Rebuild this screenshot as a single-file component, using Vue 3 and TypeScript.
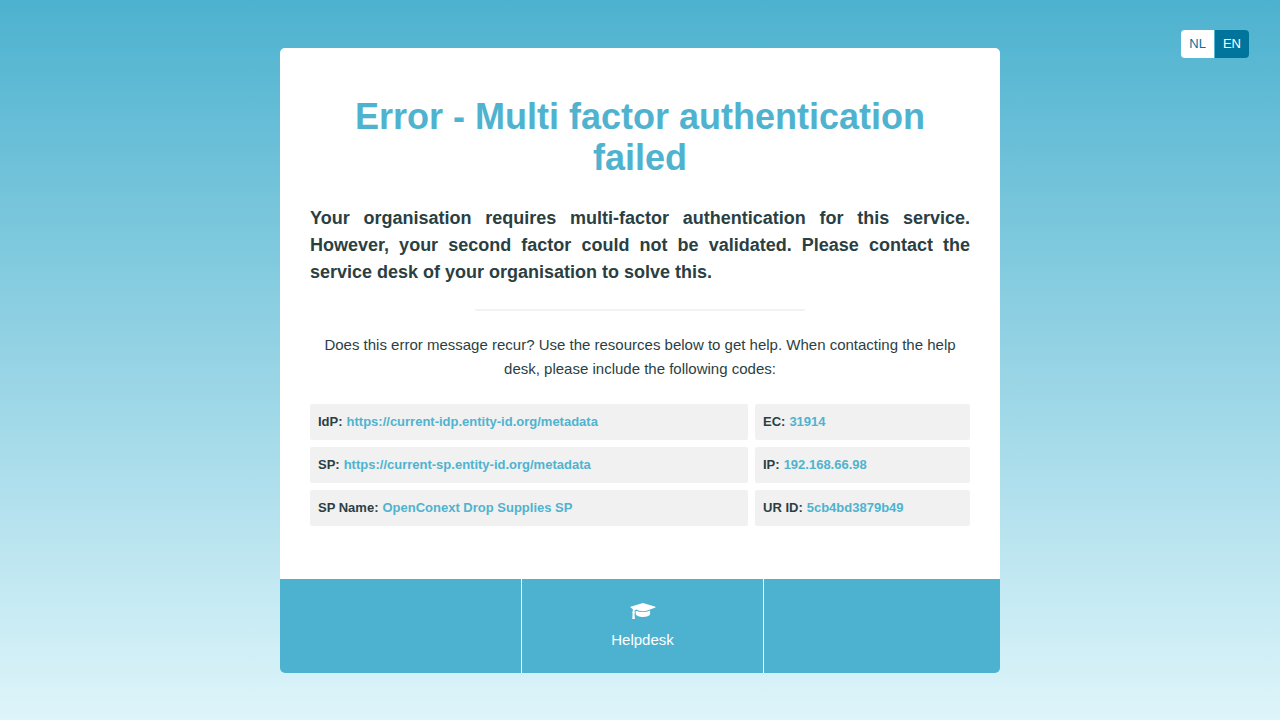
<script setup lang="ts">
import { ref } from 'vue'

interface Detail {
  label: string
  value: string
}

const languages: string[] = ['NL', 'EN']
const active = ref<string>('EN')

const details: Detail[] = [
  { label: 'IdP:', value: 'https://current-idp.entity-id.org/metadata' },
  { label: 'EC:', value: '31914' },
  { label: 'SP:', value: 'https://current-sp.entity-id.org/metadata' },
  { label: 'IP:', value: '192.168.66.98' },
  { label: 'SP Name:', value: 'OpenConext Drop Supplies SP' },
  { label: 'UR ID:', value: '5cb4bd3879b49' },
]
</script>

<template>
  <div class="page">
    <nav class="languages" aria-label="Language">
      <button
        v-for="language in languages"
        :key="language"
        type="button"
        class="language"
        :class="{ selected: language === active }"
        :aria-pressed="language === active"
        @click="active = language"
      >{{ language }}</button>
    </nav>

    <main class="card">
      <div class="body">
        <h1 class="title">Error - Multi factor authentication failed</h1>
        <p class="lead">
          Your organisation requires multi-factor authentication for this service. However, your second
          factor could not be validated. Please contact the service desk of your organisation to solve this.
        </p>
        <hr class="divider" />
        <p class="hint">
          Does this error message recur? Use the resources below to get help. When contacting the help
          desk, please include the following codes:
        </p>
        <dl class="details">
          <div v-for="item in details" :key="item.label" class="detail">
            <dt>{{ item.label }}</dt>
            <dd>{{ item.value }}</dd>
          </div>
        </dl>
      </div>

      <footer class="footer">
        <div class="cell"></div>
        <div class="cell">
          <a class="help" href="#helpdesk">
            <svg class="cap" viewBox="0 0 26 18" aria-hidden="true">
              <path d="M13 1 25.500 4.800v.7L20 7.400Q17 9.200 13 9.200T6 7.500L4.700 8.200 4.500 9.500l.6.8-.6 1L4.900 17H2.300l.3-5.700-.5-1 .6-.8.2-2.300L.5 5.500v-.7Z" />
              <path d="M5.700 8.700Q9 10.100 13 10.100T20.100 8.600V12.300C19.500 14.200 16.500 15 13 15S6.300 14 5.700 12Z" />
            </svg>
            <span>Helpdesk</span>
          </a>
        </div>
        <div class="cell"></div>
      </footer>
    </main>
  </div>
</template>

<style>
body {
  margin: 0;
}
</style>

<style scoped>
.page {
  box-sizing: border-box;
  position: relative;
  min-height: 100vh;
  padding: 48px 20px 47px;
  background: linear-gradient(#4db2cf 0%, #def5fa 100%);
  color: #2b3f43;
  font-family: "Liberation Sans", Arial, sans-serif;
}

.languages {
  position: absolute;
  top: 30px;
  right: 31px;
  display: flex;
  gap: 1px;
}

.language {
  height: 28px;
  padding: 0 8px;
  border: 0;
  background: #fff;
  color: #00749a;
  font: 13px/28px "Liberation Sans", Arial, sans-serif;
  cursor: pointer;
}

.language:first-child {
  border-radius: 4px 0 0 4px;
}

.language:last-child {
  border-radius: 0 4px 4px 0;
}

.language.selected {
  background: #00749a;
  color: #fff;
}

.card {
  max-width: 720px;
  margin: 0 auto;
  overflow: hidden;
  border-radius: 5px;
  background: #fff;
}

.body {
  padding: 48px 30px 53px;
}

.title {
  margin: 0 0 27px;
  color: #4fb3cf;
  font-size: 36px;
  line-height: 41px;
  text-align: center;
}

.lead {
  margin: 0 0 23px;
  font-size: 18px;
  font-weight: bold;
  line-height: 27px;
  text-align: justify;
}

.divider {
  width: 50%;
  height: 2px;
  margin: 0 auto 22px;
  border: 0;
  background: #f2f2f2;
}

.hint {
  margin: 0 0 23px;
  font-size: 15px;
  line-height: 24px;
  text-align: center;
}

.details {
  display: grid;
  grid-template-columns: 438fr 215fr;
  gap: 7px;
  margin: 0;
  font-size: 13px;
  font-weight: bold;
  line-height: 20px;
}

.detail {
  display: flex;
  gap: 4px;
  padding: 8px;
  border-radius: 2px;
  background: #f1f1f1;
}

.detail dd {
  margin: 0;
  color: #4fb3cf;
}

.footer {
  display: grid;
  grid-template-columns: 242fr 242fr 236fr;
  min-height: 94px;
  background: #4db2d0;
}

.cell:not(:last-child) {
  border-right: 1px solid #fff;
}

.help {
  display: flex;
  flex-direction: column;
  align-items: center;
  gap: 10px;
  padding: 23px 0;
  color: #fff;
  font-size: 15px;
  line-height: 20px;
  text-decoration: none;
}

.cap {
  width: 26px;
  height: 18px;
  fill: #fff;
}
</style>
